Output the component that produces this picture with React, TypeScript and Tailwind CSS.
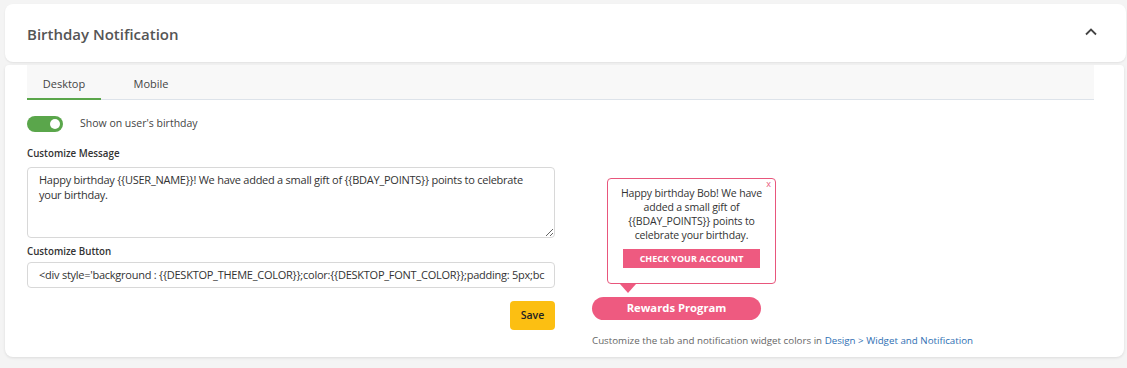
import React from "react";

export default function App() {
  return (
    <div
      className="w-[1127px] h-[368px] bg-[#f4f4f4] overflow-hidden pt-[4px] pl-[5px] pr-[1px]"
      style={{ fontFamily: '"Open Sans", "Noto Sans", sans-serif' }}
    >
      {/* Header card */}
      <div className="h-[58px] bg-white rounded-[8px] shadow-[0_1px_2px_rgba(0,0,0,0.08)] flex items-center justify-between pl-[22px] pr-[28px]">
        <div className="text-[15px] font-semibold text-[#555] mt-[2px]">Birthday Notification</div>
        <svg width="14" height="10" viewBox="0 0 14 10" className="mt-[-2px]">
          <path d="M2 7.5 L7 2.5 L12 7.5" fill="none" stroke="#444" strokeWidth="1.8" />
        </svg>
      </div>

      {/* Body card */}
      <div className="mt-[3px] h-[292px] w-[1119px] bg-white rounded-b-[8px] rounded-t-[4px] shadow-[0_1px_3px_rgba(0,0,0,0.1)] pl-[22px] pr-[30px]">
        {/* tabs */}
        <div className="h-[35px] bg-[#f8f8f8] border-b border-[#dde3ea] flex text-[11px] text-[#444]">
          <div className="w-[74px] flex items-center justify-center border-b-2 border-[#5aa64b] mb-[-1px] pt-[5px]">Desktop</div>
          <div className="w-[74px] flex items-center justify-center ml-[13px] pt-[5px]">Mobile</div>
        </div>

        <div className="flex">
          {/* left column */}
          <div className="w-[528px]">
            <div className="flex items-center mt-[16px]">
              <div className="w-[36px] h-[16px] rounded-full bg-[#5aa64b] relative">
                <div className="absolute right-[3px] top-[3px] w-[10px] h-[10px] rounded-full bg-white" />
              </div>
              <div className="ml-[17px] text-[10.5px] text-[#444]">Show on user's birthday</div>
            </div>
            <div className="mt-[15px] text-[9.75px] font-semibold text-[#333]">Customize Message</div>
            <textarea
              className="mt-[5px] block w-[528px] h-[71px] border border-[#d8d8d8] rounded-[4px] px-[11px] py-[4px] text-[11px] tracking-[-0.25px] leading-[15px] text-[#333] resize-y outline-none"
              style={{ fontFamily: '"Open Sans", "Noto Sans", sans-serif' }}
              defaultValue="Happy birthday {{USER_NAME}}! We have added a small gift of {{BDAY_POINTS}} points to celebrate your birthday."
            />
            <div className="mt-[7px] text-[9.75px] font-semibold text-[#333]">Customize Button</div>
            <div className="mt-[3px] w-[528px] h-[26px] border border-[#d8d8d8] rounded-[4px] pl-[11px] flex items-center text-[11px] tracking-[-0.25px] text-[#333] overflow-hidden whitespace-nowrap">
              {"<div style='background : {{DESKTOP_THEME_COLOR}};color:{{DESKTOP_FONT_COLOR}};padding: 5px;bc"}
            </div>
            <div className="flex justify-end mt-[13px]">
              <button className="w-[45px] h-[29px] rounded-[4px] bg-[#fcbf12] text-[10.5px] font-semibold text-[#222]">Save</button>
            </div>
          </div>

          {/* right column */}
          <div className="ml-[37px] w-[420px] pt-[78px]">
            <div className="ml-[15px] w-[169px] h-[106px] border border-[#e8567c] rounded-[4px] bg-white relative flex flex-col items-center pt-[7px]">
              <span className="absolute right-[4px] top-[-2px] text-[9px] text-[#e8567c]">x</span>
              <div className="text-[10.5px] tracking-[-0.15px] leading-[14px] text-[#333] text-center px-[8px]">
                Happy birthday Bob! We have added a small gift of {"{{BDAY_POINTS}}"} points to celebrate your birthday.
              </div>
              <div className="mt-[7px] w-[137px] h-[19px] bg-[#ee5a80] text-white text-[9px] font-bold flex items-center justify-center">
                CHECK YOUR ACCOUNT
              </div>
            </div>
            <div className="ml-[28px] w-0 h-0 border-l-[8px] border-r-[8px] border-t-[9px] border-l-transparent border-r-transparent border-t-[#ee5a80]" />
            <div className="mt-[4px] w-[169px] h-[23px] rounded-full bg-[#ee5a80] text-white text-[11.25px] font-bold flex items-center justify-center">
              Rewards Program
            </div>
            <div className="mt-[14px] text-[9.75px] text-[#666] whitespace-nowrap">
              Customize the tab and notification widget colors in{" "}
              <span className="text-[#2f6fb3]">Design &gt; Widget and Notification</span>
            </div>
          </div>
        </div>
      </div>
    </div>
  );
}
